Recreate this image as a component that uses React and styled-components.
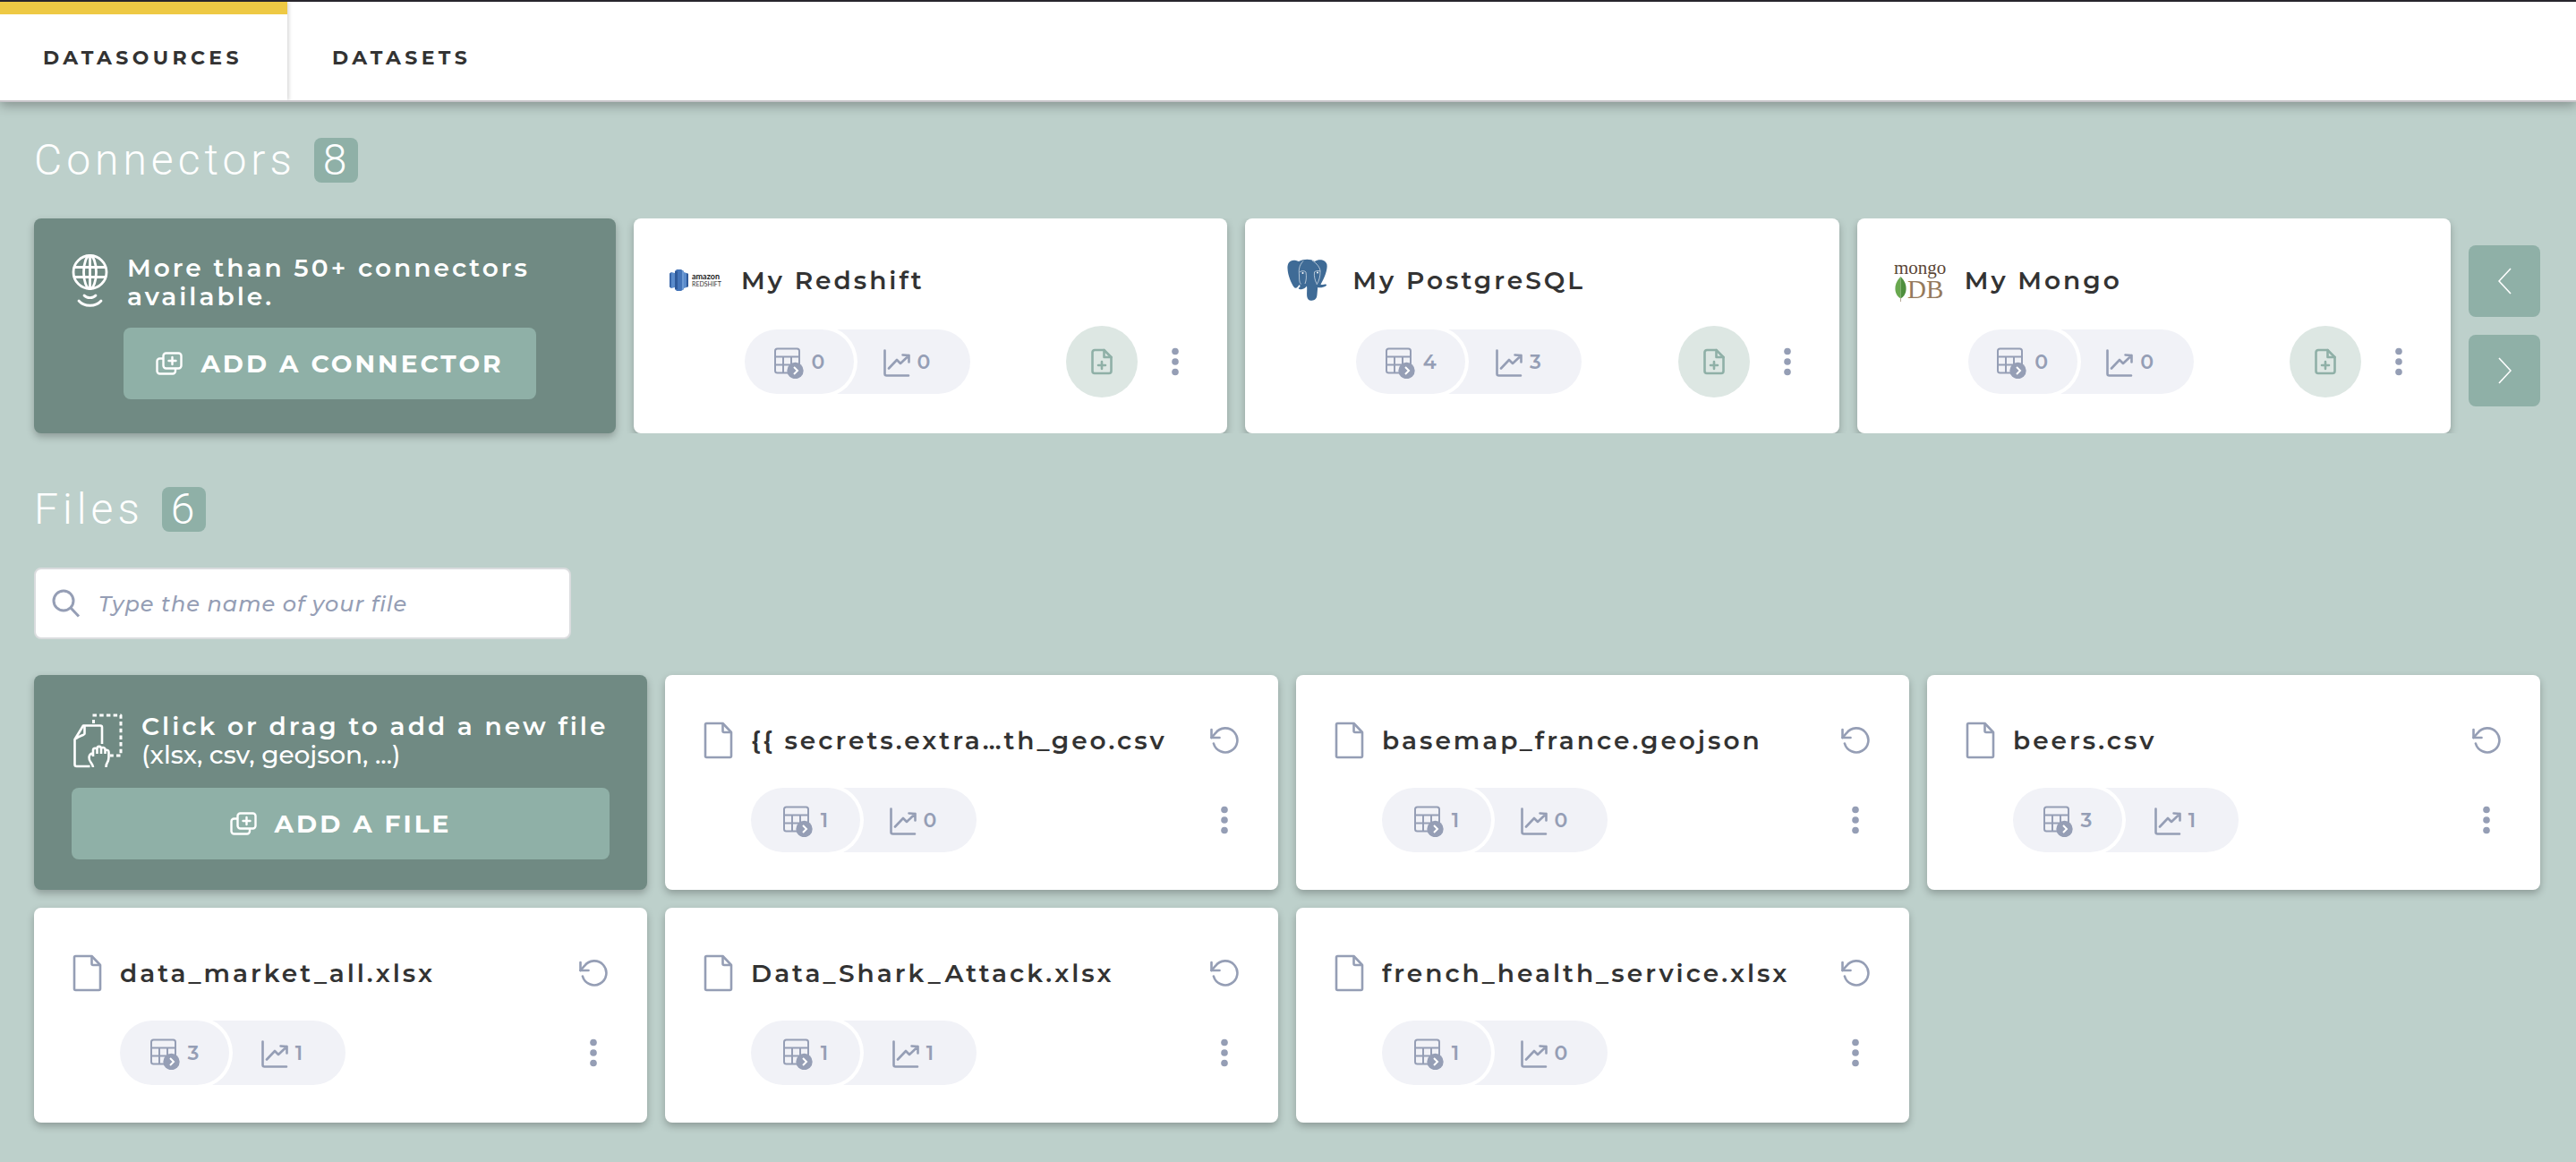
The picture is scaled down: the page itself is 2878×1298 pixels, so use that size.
import React from 'react';
import styled, { createGlobalStyle } from 'styled-components';

const colors = {
  background: '#bdd0cb',
  dark: '#708a83',
  green: '#8fb0a7',
  paleGreen: '#dde7e3',
  grey: '#f1f2f7',
  icon: '#959eb5',
  text: '#333333',
  yellow: '#eec944',
};

const connectors = [
  { name: 'My Redshift', logo: 'redshift', datasets: 0, charts: 0 },
  { name: 'My PostgreSQL', logo: 'postgres', datasets: 4, charts: 3 },
  { name: 'My Mongo', logo: 'mongo', datasets: 0, charts: 0 },
];

const files = [
  { name: '{{ secrets.extra…th_geo.csv', datasets: 1, charts: 0 },
  { name: 'basemap_france.geojson', datasets: 1, charts: 0 },
  { name: 'beers.csv', datasets: 3, charts: 1 },
  { name: 'data_market_all.xlsx', datasets: 3, charts: 1 },
  { name: 'Data_Shark_Attack.xlsx', datasets: 1, charts: 1 },
  { name: 'french_health_service.xlsx', datasets: 1, charts: 0 },
];

export default function App() {
  return (
    <>
      <GlobalStyle />
      <Header>
        <Tab href="#datasources" $active>Datasources</Tab>
        <Tab href="#datasets">Datasets</Tab>
      </Header>
      <Main>
        <Section>
          <Title>Connectors <Count>8</Count></Title>
          <ConnectorRow>
            <AddCard>
              <Head>
                <GlobeIcon />
                <AddText>More than 50+ connectors available.</AddText>
              </Head>
              <AddButton $indent><CopyPlusIcon />Add a connector</AddButton>
            </AddCard>
            <ConnectorList>
              {connectors.map(connector => <ConnectorCard key={connector.name} {...connector} />)}
            </ConnectorList>
            <Pager>
              <PagerButton aria-label="Previous"><Chevron d="M14 1 1 15l13 14" /></PagerButton>
              <PagerButton aria-label="Next"><Chevron d="M1 1l13 14L1 29" /></PagerButton>
            </Pager>
          </ConnectorRow>
        </Section>
        <Section>
          <Title>Files <Count>6</Count></Title>
          <Search>
            <SearchIcon />
            <SearchInput type="text" aria-label="File name" placeholder="Type the name of your file" />
          </Search>
          <FileGrid>
            <AddCard $file>
              <Head>
                <DragIcon />
                <AddText>
                  Click or drag to add a new file
                  <Formats>(xlsx, csv, geojson, ...)</Formats>
                </AddText>
              </Head>
              <AddButton><CopyPlusIcon />Add a file</AddButton>
            </AddCard>
            {files.map(file => <FileCard key={file.name} {...file} />)}
          </FileGrid>
        </Section>
      </Main>
    </>
  );
}

const ConnectorCard = ({ name, logo, datasets, charts }) => {
  const Logo = logos[logo];
  return (
    <Card>
      <Head>
        <Logo />
        <Name>{name}</Name>
      </Head>
      <Actions $indent={84}>
        <Stats datasets={datasets} charts={charts} />
        <RoundButton aria-label="Create a dataset"><FilePlusIcon /></RoundButton>
        <IconButton aria-label="More"><DotsIcon /></IconButton>
      </Actions>
    </Card>
  );
};

const FileCard = ({ name, datasets, charts }) => (
  <Card $file>
    <Head>
      <FileIcon />
      <Name>{name}</Name>
      <IconButton aria-label="Refresh"><RefreshIcon /></IconButton>
    </Head>
    <Actions $indent={54}>
      <Stats datasets={datasets} charts={charts} />
      <IconButton aria-label="More"><DotsIcon /></IconButton>
    </Actions>
  </Card>
);

const Stats = ({ datasets, charts }) => (
  <Pills>
    <DatasetPill><TableIcon />{datasets}</DatasetPill>
    <ChartPill><ChartIcon />{charts}</ChartPill>
  </Pills>
);

/* icons */

const Chevron = ({ d }) => (
  <svg width="15" height="30" viewBox="0 0 15 30" fill="none" stroke="#fff" strokeWidth="1.6"><path d={d} /></svg>
);

const CopyPlusIcon = () => (
  <svg width="30" height="26" viewBox="0 0 30 26" fill="none" stroke="currentColor" strokeWidth="2.4" strokeLinecap="round">
    <rect x="8.5" y="1.5" width="20" height="17" rx="3" />
    <path d="M8 7.5H4.500a3 3 0 0 0-3 3V21.500a3 3 0 0 0 3 3H19a3 3 0 0 0 3-3V19" />
    <path d="M18.500 6v8M14.500 10h8" />
  </svg>
);

const GlobeIcon = () => (
  <svg width="44" height="62" viewBox="-2 0 44 62" fill="none" stroke="#fff" strokeWidth="2.8" strokeLinecap="round">
    <circle cx="20.5" cy="20" r="18.5" />
    <ellipse cx="20.5" cy="20" rx="7" ry="18.5" />
    <path d="M3 14.500h35M3 25.500h35M20.500 1.500v37" />
    <path d="M14 46c3 3.500 10 3.500 13 0M8 52c6 7 19 7 25 0" />
  </svg>
);

const DragIcon = () => (
  <svg width="58" height="62" viewBox="-2 0 58 62" fill="none" stroke="#fff" strokeWidth="2.6" strokeLinejoin="round">
    <path d="M21.500 3H53V48H41" strokeWidth="3" strokeDasharray="4.500 3.200" />
    <path d="M22.500 8v4" strokeWidth="3" />
    <path d="M18.500 60H3.500A2 2 0 0 1 1.500 58V30L11 14.500H30A2 2 0 0 1 32 16.500V35" />
    <path d="M12.500 15v8.500c0 2-7 2.500-10 6" />
    <path d="M22 61c0-4-5-6-4.500-11 .3-3 2-4.500 4.500-4.500M22 49v-7c0-3 4.500-3 4.500 0v4M26.500 42v-1.500c0-3.500 4.500-3.500 4.500 0V46M31 41c0-3 4.500-2.500 4.500.5V46M35.500 43c1-2 4-1.500 4 1.500 0 6 .5 8-1.500 11-1 1.500-1.500 3.500-1.500 5.500" />
  </svg>
);

const TableIcon = () => (
  <svg width="34" height="38" viewBox="0 0 34 38" fill="none" stroke={colors.icon} strokeWidth="2">
    <rect x="1" y="4.5" width="27" height="27" rx="2.5" />
    <path d="M1 13.500h27M1 22.500h27M10 13.500v18M19 13.500v18" />
    <circle cx="23.5" cy="29" r="9.2" fill={colors.icon} stroke="none" />
    <path d="M22 25l4 4-4 4" stroke="#fff" />
  </svg>
);

const ChartIcon = () => (
  <svg width="30" height="34" viewBox="0 0 30 34" fill="none" stroke={colors.icon} strokeWidth="2.6" strokeLinecap="round" strokeLinejoin="round">
    <path d="M1.500 4.500V30.500a2 2 0 0 0 2 2H28" />
    <path d="M6 24.500l9-9.500 4 4 9.500-9M21.500 9.500l7 .5v7.500" />
  </svg>
);

const FilePlusIcon = () => (
  <svg width="24" height="30" viewBox="0 0 24 30" fill="none" stroke={colors.green} strokeWidth="2.6" strokeLinecap="round" strokeLinejoin="round">
    <path d="M14.500 2H4a2.500 2.500 0 0 0-2.500 2.500v21A2.500 2.500 0 0 0 4 28H20a2.500 2.500 0 0 0 2.500-2.500V10z" />
    <path d="M14.500 2v8h8M12 15v8M8 19h8" />
  </svg>
);

const FileIcon = () => (
  <svg width="34" height="42" viewBox="0 0 34 42" fill="none" stroke={colors.icon} strokeWidth="2.6" strokeLinejoin="round">
    <path d="M22.500 2H4.500A1.500 1.500 0 0 0 3 3.500V38.500A1.500 1.500 0 0 0 4.500 40H30.500A1.500 1.500 0 0 0 32 38.500V12z" />
    <path d="M22.500 2v8.500a1.500 1.500 0 0 0 1.500 1.500h8" />
  </svg>
);

const RefreshIcon = () => (
  <svg width="34" height="30" viewBox="0 0 34 30" fill="none" stroke={colors.icon} strokeWidth="2.6" strokeLinecap="round" strokeLinejoin="round">
    <path d="M2.500 3v9h9" />
    <path d="M2.500 12L7 6.900A13.500 13.500 0 1 1 4.900 18.500" />
  </svg>
);

const DotsIcon = () => (
  <svg width="8" height="32" viewBox="0 0 8 32" fill={colors.icon}>
    <circle cx="4" cy="4.5" r="3.8" />
    <circle cx="4" cy="16" r="3.8" />
    <circle cx="4" cy="27.5" r="3.8" />
  </svg>
);

const SearchIcon = () => (
  <svg width="32" height="32" viewBox="0 0 32 32" fill="none" stroke={colors.icon} strokeWidth="3">
    <circle cx="13" cy="13" r="11" />
    <path d="M21 21l9 9.500" />
  </svg>
);

/* logos */

const logos = {
  redshift: () => (
    <svg width="60" height="24" viewBox="0 0 60 24">
      <path fill="#3a68ab" d="M0 4.500 2 3v18l-2-1.500zM6 2l5-2v24l-5-2z" />
      <path fill="#5a8bcb" d="M2 3l4 1v16l-4 1zM19 4l-3-1v18l3-1z" />
      <path fill="#4474b8" d="M6 2l2-2h5l3 2v20l-3 2H8l-2-2z" />
      <path fill="#2f5a9a" d="M6 2h3v20H6zM19 4l2 .8v14.400l-2 .8z" />
      <path fill="#6c9ad4" d="M14 1l2 1v20l-2 1z" />
      <text x="25" y="11" fontFamily="Lato, sans-serif" fontWeight="700" fontSize="9" fill="#1a1a1a">amazon</text>
      <text x="25" y="19" fontFamily="Lato, sans-serif" fontSize="7" fill="#333">REDSHIFT</text>
    </svg>
  ),
  postgres: () => (
    <svg width="60" height="50" viewBox="0 0 60 50">
      <path
        fill="#3f6b96"
        d="M20 4C12 .5 7 4 7.500 12c.4 8 4 16 7 20.500 1 1.500 3 1.600 4 .2l2.500-3c.5 2 1 3-.8 3.600-1.200.5-.2 2.200 2.500 2 3-.2 5-2 6.300-3.800.6 3-.2 8 .2 11.500.5 4 3 5.500 6.500 4.500 3.500-.8 4.500-3 4.800-6.500l.7-8c2.500.8 6.500.2 9-1.500 2-1.500.5-2.400-2-1.700-1.500.3-3 .4-3.700 0C48.500 23 52.500 13 51.500 7.500 50 1.500 42 1 38 4c-5-3-12-3-18 0z"
      />
      <path
        fill="none"
        stroke="#fff"
        strokeWidth=".6"
        d="M25 3.500C20 9 20 14 20.500 19c.3 4-.5 8 2 10.500M21 16c2-2 6-1.500 7 0 .8 5 .5 9-1 13M35 3c5 3 9 8 9 12 0 6-1 10-4 15M44 15c-1.500-1-5-.5-6.500.8-.5 5 .5 9 2.500 13"
      />
      <circle cx="24.5" cy="17" r="1" fill="#fff" />
      <circle cx="41" cy="16.5" r="1" fill="#fff" />
    </svg>
  ),
  mongo: () => (
    <svg width="60" height="54" viewBox="-1 -5 60 54">
      <text x="0" y="15" fontFamily="Liberation Serif, serif" fontSize="21" fill="#5b4636">mongo</text>
      <text x="15" y="42" fontFamily="Liberation Serif, serif" fontSize="29" fill="#957a5c">DB</text>
      <path fill="#69a84f" d="M7.500 18C2.500 23 1 28 1.500 33c.5 4.500 3 8 6 9.500z" />
      <path fill="#4f8f3d" d="M7.500 18c5 5 6.500 10 6 15-.5 4.500-3 8-6 9.500z" />
      <path fill="none" stroke="#b7a998" d="M7.500 42v4" />
    </svg>
  ),
};

/* styles */

const GlobalStyle = createGlobalStyle`
  * {
    box-sizing: border-box;
  }
  body {
    margin: 0;
    background-color: ${colors.background};
    color: ${colors.text};
    font-family: Montserrat, Inter, sans-serif;
  }
  button {
    border: 0;
    padding: 0;
    font: inherit;
    color: inherit;
    cursor: pointer;
  }
  svg {
    flex-shrink: 0;
  }
`;

const Header = styled.nav`
  display: flex;
  gap: 2px;
  background-color: #fff;
  border-top: 2px solid #28252d;
  border-bottom: 2px solid #c8c6ca;
  box-shadow: 0 4px 12px rgba(0, 0, 0, 0.3);
`;

const Tab = styled.a`
  display: flex;
  align-items: center;
  height: 110px;
  padding: 0 50px 0 48px;
  border-top: 14px solid ${({ $active }) => ($active ? colors.yellow : 'transparent')};
  ${({ $active }) => $active && 'box-shadow: 2px 0 4px rgba(0, 0, 0, 0.15); clip-path: inset(0 -8px 0 0);'}
  color: ${colors.text};
  font-size: 22px;
  font-weight: 700;
  letter-spacing: 0.2em;
  text-decoration: none;
  text-transform: uppercase;
`;

const Main = styled.main`
  display: flex;
  flex-direction: column;
  gap: 60px;
  padding: 40px 40px 44px 38px;
`;

const Section = styled.section`
  display: flex;
  flex-direction: column;
  gap: 40px;
`;

const Title = styled.h1`
  display: flex;
  align-items: center;
  gap: 20px;
  margin: 0;
  color: #fff;
  font-family: 'Roboto Slab', Roboto, sans-serif;
  font-size: 48px;
  font-weight: 300;
  line-height: 50px;
  letter-spacing: 5px;
`;

const Count = styled.span`
  padding: 0 10px;
  border-radius: 8px;
  background-color: ${colors.green};
  letter-spacing: 3px;
`;

const ConnectorRow = styled.div`
  display: flex;
  gap: 20px;
`;

const ConnectorList = styled.div`
  flex: 1;
  display: grid;
  grid-template-columns: repeat(3, 1fr);
  gap: 20px;
  clip-path: inset(0 -10px);
`;

const FileGrid = styled.div`
  display: grid;
  grid-template-columns: repeat(4, 1fr);
  gap: 20px;
`;

const Card = styled.article`
  display: flex;
  flex-direction: column;
  gap: ${({ $file }) => ($file ? 18 : 20)}px;
  min-width: 0;
  padding: ${({ $file }) => ($file ? '42px 40px 38px 42px' : '38px 38px 40px 40px')};
  border-radius: 8px;
  background-color: #fff;
  box-shadow: 0 4px 8px rgba(0, 0, 0, 0.25);
`;

const AddCard = styled(Card)`
  flex: 0 0 650px;
  gap: ${({ $file }) => ($file ? 22 : 20)}px;
  padding: ${({ $file }) => ($file ? '42px 42px 34px' : '40px 40px 38px')};
  background-color: ${colors.dark};
  color: #fff;
`;

const Head = styled.div`
  display: flex;
  align-items: center;
  gap: 20px;
  height: 62px;
`;

const Name = styled.h2`
  flex: 1;
  margin: 0;
  overflow: hidden;
  font-size: 28px;
  font-weight: 600;
  line-height: 40px;
  letter-spacing: 3px;
  white-space: nowrap;
`;

const AddText = styled.p`
  margin: 0;
  font-size: 28px;
  font-weight: 600;
  line-height: 32px;
  letter-spacing: 3px;
`;

const Formats = styled.span`
  display: block;
  font-weight: 500;
  letter-spacing: 0;
`;

const AddButton = styled.button`
  display: flex;
  align-items: center;
  justify-content: center;
  gap: 20px;
  height: 80px;
  ${({ $indent }) => $indent && 'width: 461px; margin-left: 60px;'}
  border-radius: 8px;
  background-color: ${colors.green};
  && {
    font-size: 28px;
    font-weight: 700;
    color: #fff;
  }
  letter-spacing: 3px;
  text-transform: uppercase;
`;

const Actions = styled.div`
  display: flex;
  align-items: center;
  gap: 22px;
  height: 80px;
  padding-left: ${({ $indent }) => $indent}px;
`;

const Pills = styled.div`
  display: flex;
  margin-right: auto;
  color: ${colors.icon};
  font-size: 22px;
  font-weight: 600;
`;

const Pill = styled.span`
  display: flex;
  align-items: center;
  justify-content: center;
  gap: 8px;
  height: 72px;
  background-color: ${colors.grey};
`;

const DatasetPill = styled(Pill)`
  z-index: 1;
  width: 122px;
  border-radius: 36px;
  box-shadow: 0 0 0 4px #fff;
`;

const ChartPill = styled(Pill)`
  width: 154px;
  margin-left: -24px;
  padding-left: 12px;
  border-radius: 0 36px 36px 0;
`;

const IconButton = styled.button`
  display: flex;
  align-items: center;
  justify-content: center;
  width: 40px;
  height: 40px;
  background: none;
`;

const RoundButton = styled(IconButton)`
  width: 80px;
  height: 80px;
  border-radius: 50%;
  background-color: ${colors.paleGreen};
`;

const Pager = styled.div`
  display: flex;
  flex-direction: column;
  justify-content: center;
  gap: 20px;
`;

const PagerButton = styled(IconButton)`
  width: 80px;
  height: 80px;
  border-radius: 8px;
  background-color: ${colors.green};
`;

const Search = styled.label`
  display: flex;
  align-items: center;
  gap: 20px;
  width: 600px;
  height: 80px;
  padding: 0 18px;
  border: 2px solid #dadcde;
  border-radius: 8px;
  background-color: #fff;
`;

const SearchInput = styled.input`
  flex: 1;
  min-width: 0;
  padding: 0;
  border: 0;
  outline: 0;
  font-family: inherit;
  font-size: 24px;
  font-style: italic;
  font-weight: 500;
  letter-spacing: 1px;
  &::placeholder {
    color: ${colors.icon};
    opacity: 1;
  }
`;
